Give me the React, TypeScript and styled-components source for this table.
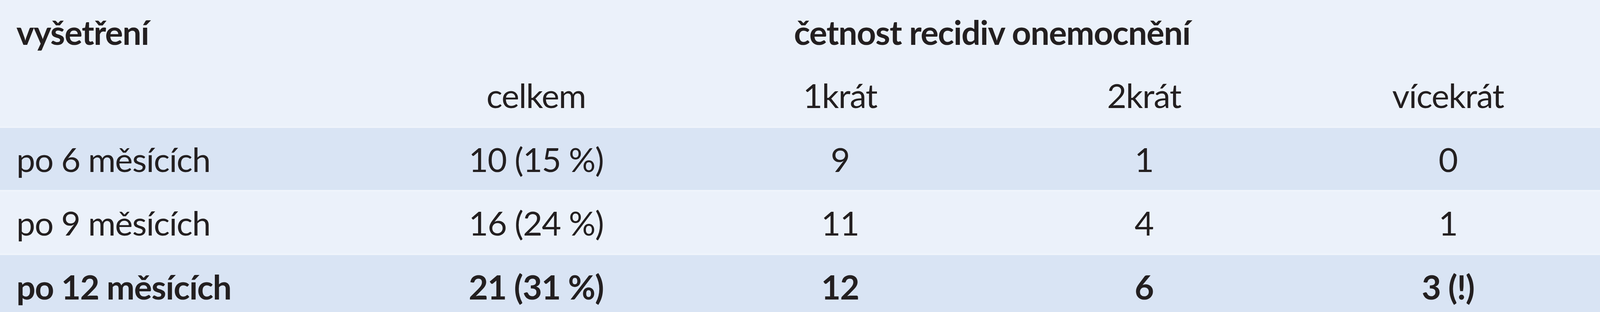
import React from "react"
import styled, { createGlobalStyle } from "styled-components"

type Shade = "light" | "dark"

const GlobalStyle = createGlobalStyle`
  html, body {
    margin: 0;
    padding: 0;
    background: #ebf1fa;
  }
  body {
    font-family: Lato, "Open Sans", sans-serif;
    color: #231f20;
    overflow: hidden;
  }
`

const Table = styled.table`
  width: 100%;
  border-collapse: collapse;
  table-layout: fixed;
  font-size: 86px;
  letter-spacing: -1.5px;
`

const FirstCol = styled.col`
  width: 24.01%;
`

const DataCol = styled.col`
  width: 19%;
`

const Row = styled.tr<{ $shade: Shade; $bold?: boolean; $divider?: boolean }>`
  height: 163px;
  background: ${(props) => (props.$shade === "dark" ? "#d9e4f4" : "#ebf1fa")};
  font-weight: ${(props) => (props.$bold ? 700 : 400)};
  border-top: ${(props) => (props.$divider ? "4px solid #eff4fb" : "none")};
`

const Cell = styled.td<{ $align?: "left" | "center" }>`
  padding: 0 0 0 ${(props) => (props.$align === "left" ? "42px" : "0")};
  text-align: ${(props) => props.$align ?? "center"};
  line-height: 159px;
  vertical-align: middle;
  white-space: nowrap;
`

const HeadCell = styled(Cell).attrs({ as: "th" })<{ $bold?: boolean }>`
  font-weight: ${(props) => (props.$bold ? 700 : 400)};
`

const rows: { label: string; total: string; once: string; twice: string; more: string; bold?: boolean }[] = [
  { label: "po 6 měsících", total: "10 (15 %)", once: "9", twice: "1", more: "0" },
  { label: "po 9 měsících", total: "16 (24 %)", once: "11", twice: "4", more: "1" },
  { label: "po 12 měsících", total: "21 (31 %)", once: "12", twice: "6", more: "3 (!)", bold: true },
]

export default function App() {
  return (
    <>
      <GlobalStyle />
      <Table>
        <colgroup>
          <FirstCol />
          <DataCol />
          <DataCol />
          <DataCol />
          <DataCol />
        </colgroup>
        <thead>
          <Row $shade="light">
            <HeadCell $align="left" $bold>
              vyšetření
            </HeadCell>
            <HeadCell colSpan={4} $bold>
              četnost recidiv onemocnění
            </HeadCell>
          </Row>
          <Row $shade="light">
            <HeadCell $align="left" />
            <HeadCell>celkem</HeadCell>
            <HeadCell>1krát</HeadCell>
            <HeadCell>2krát</HeadCell>
            <HeadCell>vícekrát</HeadCell>
          </Row>
        </thead>
        <tbody>
          {rows.map((row, i) => (
            <Row key={row.label} $shade={i % 2 === 0 ? "dark" : "light"} $bold={row.bold} $divider>
              <Cell $align="left">{row.label}</Cell>
              <Cell>{row.total}</Cell>
              <Cell>{row.once}</Cell>
              <Cell>{row.twice}</Cell>
              <Cell>{row.more}</Cell>
            </Row>
          ))}
        </tbody>
      </Table>
    </>
  )
}
